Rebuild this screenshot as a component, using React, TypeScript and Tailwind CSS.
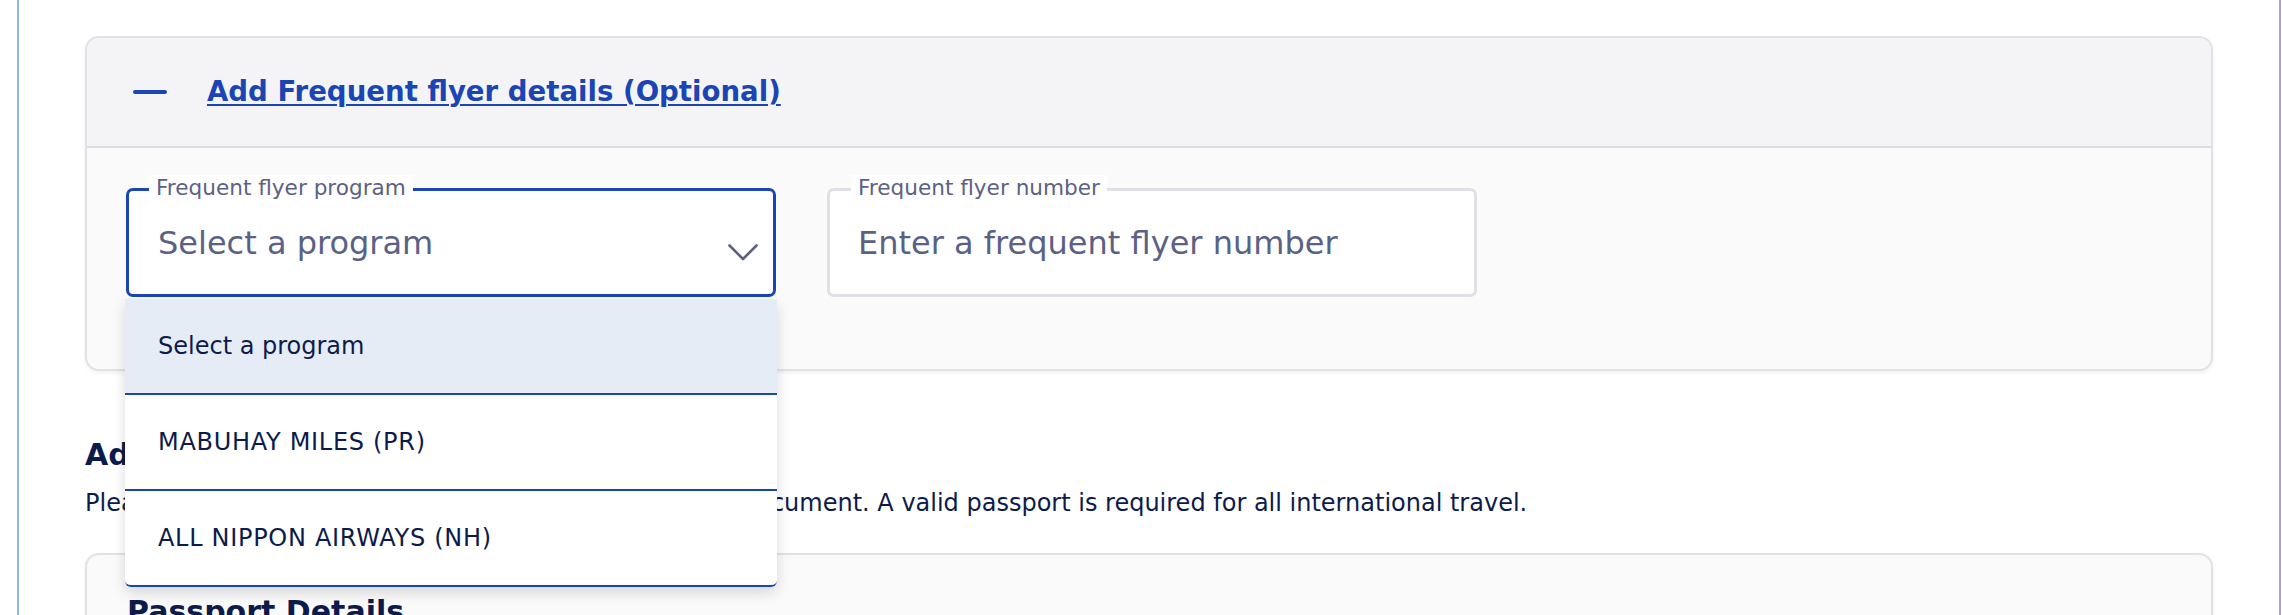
import { useState } from 'react';

const programs = ['Select a program', 'MABUHAY MILES (PR)', 'ALL NIPPON AIRWAYS (NH)'];

function Chevron() {
    return (
        <svg width="30" height="17" viewBox="0 0 30 17" fill="none" className="mt-[19px] shrink-0">
            <path d="M1.5 1.5 L15 15 L28.5 1.5" stroke="#5b6185" strokeWidth="2.6" strokeLinecap="round" strokeLinejoin="round" />
        </svg>
    );
}

export default function App() {
    const [selected] = useState(0);

    return (
        <div className="w-full h-[615px] overflow-hidden bg-white font-['DejaVu_Sans',sans-serif]">
            <div className="ml-[17px] w-[2264px] h-full border-l-2 border-r-2 border-l-[#94b3ea] border-r-[#a6a3d8] px-[66px] pt-[36px]">
                {/* Frequent flyer accordion */}
                <section className="rounded-[14px] border-2 border-[#e1e1e7] bg-[#fafafb] shadow-[0_2px_4px_rgba(0,0,0,0.06)]">
                    <div className="h-[110px] flex items-center pl-[46px] gap-[40px] bg-[#f4f4f7] rounded-t-[12px] border-b-2 border-[#dcdce4]">
                        <div className="w-[34px] h-[4px] rounded-full bg-[#1b45b4]" />
                        <a href="#" className="text-[27.6px] leading-[40px] font-bold text-[#1b45b4] underline decoration-2 underline-offset-[3px]">
                            Add Frequent flyer details (Optional)
                        </a>
                    </div>

                    <div className="flex gap-[51px] pl-[39px] pt-[40px] pb-[72px]">
                        {/* program select */}
                        <div className="relative">
                            <div className="w-[650px] h-[109px] rounded-[7px] border-[3px] border-[#1b45b4] bg-white flex justify-between pl-[29px] pr-[15px] items-center">
                                <span className="text-[32px] leading-[44px] text-[#5b6185]">Select a program</span>
                                <Chevron />
                            </div>
                            <span className="absolute left-[23px] top-[-13px] px-[7px] bg-white text-[21.6px] leading-[26px] text-[#5b6185]">
                                Frequent flyer program
                            </span>

                            {/* open listbox */}
                            <ul className="absolute left-[-1px] top-[111px] w-[652px] bg-white rounded-b-[6px] shadow-[0_6px_14px_rgba(0,0,0,0.14)] z-10">
                                {programs.map((p, i) => (
                                    <li
                                        key={p}
                                        className={`h-[96px] flex items-center pl-[33px] border-b-2 border-[#1b45b4] text-[24px] text-[#0d1b4c] ${
                                            i === selected ? 'bg-[#e6ecf6]' : 'bg-white tracking-[0.7px]'
                                        } ${i === programs.length - 1 ? 'rounded-b-[6px]' : ''}`}
                                    >
                                        {p}
                                    </li>
                                ))}
                            </ul>
                        </div>

                        {/* number input */}
                        <div className="relative">
                            <div className="w-[650px] h-[109px] rounded-[7px] border-[3px] border-[#dfdfe6] bg-white flex items-center pl-[28px]">
                                <span className="text-[32px] leading-[44px] text-[#5b6185]">Enter a frequent flyer number</span>
                            </div>
                            <span className="absolute left-[24px] top-[-13px] px-[7px] bg-white text-[21.6px] leading-[26px] text-[#5b6185]">
                                Frequent flyer number
                            </span>
                        </div>
                    </div>
                </section>

                {/* Travel documents */}
                <h2 className="mt-[64px] text-[30px] leading-[40px] font-bold text-[#0d1b4c]">Add travel documents</h2>
                <p className="mt-[13px] text-[24px] leading-[30px] text-[#0d1b4c]">
                    Please provide details of your passport or other travel document. A valid passport is required for all international travel.
                </p>

                <section className="mt-[35px] rounded-[14px] border-2 border-[#e1e1e7] bg-[#fafafb] shadow-[0_2px_4px_rgba(0,0,0,0.06)] h-[200px] pl-[40px] pt-[37px]">
                    <h3 className="text-[30px] leading-[40px] font-bold text-[#0d1b4c]">Passport Details</h3>
                </section>
            </div>
        </div>
    );
}
